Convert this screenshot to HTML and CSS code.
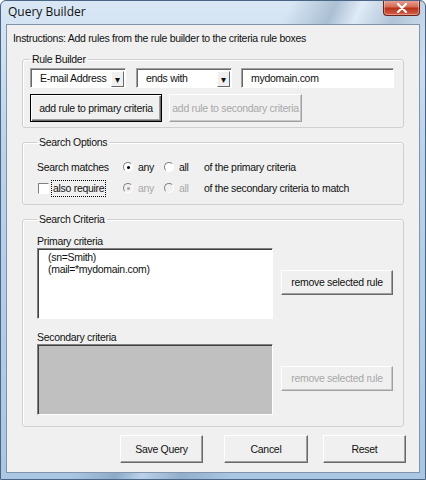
FILE: index.html
```html
<!DOCTYPE html>
<html lang="en">
<head>
    <meta charset="UTF-8">
    <title>Query Builder</title>
    <link rel="stylesheet" href="styles.css">
</head>
<body>
    <div class="window">
        <div class="titlebar">
            <span class="title">Query Builder</span>
            <span class="close-btn">
                <svg width="14" height="10" viewBox="0 0 14 10">
                    <path d="M3 1 L11 9 M11 1 L3 9" stroke="#fff" stroke-width="2.2" stroke-linecap="round"/>
                </svg>
            </span>
        </div>

        <div class="client">
            <div class="instructions">Instructions: Add rules from the rule builder to the criteria rule boxes</div>

            <fieldset class="group">
                <legend>Rule Builder</legend>
                <div class="rule-row">
                    <div class="combo combo-attr">
                        <span class="combo-text">E-mail Address</span>
                        <span class="combo-arrow">&#9662;</span>
                    </div>
                    <div class="combo combo-op">
                        <span class="combo-text">ends with</span>
                        <span class="combo-arrow">&#9662;</span>
                    </div>
                    <div class="textbox">mydomain.com</div>
                </div>
                <div class="rule-row buttons-row">
                    <button class="btn btn-default btn-add">add rule to primary criteria</button>
                    <button class="btn btn-add2" disabled>add rule to secondary criteria</button>
                </div>
            </fieldset>

            <fieldset class="group options">
                <legend>Search Options</legend>
                <div class="opt-row">
                    <span class="opt-label">Search matches</span>
                    <span class="radio-item"><span class="radio checked"></span>any</span>
                    <span class="radio-item"><span class="radio"></span>all</span>
                    <span>of the primary criteria</span>
                </div>
                <div class="opt-row">
                    <span class="opt-label"><span class="checkbox"></span><span class="focus">also require</span></span>
                    <span class="radio-item disabled"><span class="radio checked"></span>any</span>
                    <span class="radio-item disabled"><span class="radio"></span>all</span>
                    <span>of the secondary criteria to match</span>
                </div>
            </fieldset>

            <fieldset class="group criteria">
                <legend>Search Criteria</legend>
                <div class="crit-label">Primary criteria</div>
                <div class="crit-row">
                    <div class="listbox">
                        <div>(sn=Smith)</div>
                        <div>(mail=*mydomain.com)</div>
                    </div>
                    <button class="btn btn-remove">remove selected rule</button>
                </div>
                <div class="crit-label second">Secondary criteria</div>
                <div class="crit-row">
                    <div class="listbox listbox-off"></div>
                    <button class="btn btn-remove" disabled>remove selected rule</button>
                </div>
            </fieldset>

            <div class="footer">
                <button class="btn btn-foot">Save Query</button>
                <button class="btn btn-foot btn-cancel">Cancel</button>
                <button class="btn btn-foot btn-reset">Reset</button>
            </div>
        </div>
    </div>
</body>
</html>
```

FILE: styles.css
```css
body {
    margin: 0;
    font-family: "Liberation Sans", Arial, sans-serif;
    font-size: 10.5px;
    letter-spacing: -0.3px;
    color: #111;
}
.window {
    width: 426px;
    height: 480px;
    box-sizing: border-box;
    background:
        linear-gradient(115deg, rgba(255,255,255,0) 45%, rgba(90,120,150,0.35) 52%, rgba(255,255,255,0.2) 56%, rgba(90,120,150,0.3) 62%, rgba(255,255,255,0) 70%),
        linear-gradient(to bottom, #d9e7f5 0%, #bcd3ea 30%, #a9c6e3 100%);
    border: 1px solid #4a6585;
    border-radius: 6px 6px 0 0;
    overflow: hidden;
}
.titlebar {
    height: 23px;
    display: flex;
    justify-content: space-between;
    align-items: flex-start;
}
.title {
    font-family: "Open Sans", "Liberation Sans", sans-serif;
    font-size: 12px;
    letter-spacing: 0;
    line-height: 22px;
    padding-left: 7px;
}
.close-btn {
    width: 35px;
    height: 15px;
    margin-right: 5px;
    margin-top: -1px;
    display: flex;
    align-items: center;
    justify-content: center;
    background: linear-gradient(to bottom, #e9a99b 0%, #d66c56 45%, #b8321b 55%, #d5604a 100%);
    border: 1px solid #6d2418;
    border-top: none;
    border-radius: 0 0 4px 4px;
    box-shadow: inset 0 0 0 1px rgba(255,255,255,0.35);
}
.client {
    margin: 0 5px;
    height: 449px;
    box-sizing: border-box;
    background-color: #f0f0f0;
    border: 1px solid #8095ad;
    padding-top: 7px;
}
.instructions {
    line-height: 13px;
    padding-left: 6px;
}
.group {
    margin: 8px 15px 0 15px;
    padding: 2px 7px 5px 7px;
    border: 1px solid #d0d0d0;
    border-radius: 3px;
    box-shadow: inset 1px 1px 0 #fff;
}
.group legend {
    padding: 0 2px;
    line-height: 13px;
}
.rule-row {
    display: flex;
    height: 20px;
}
.buttons-row {
    margin-top: 6px;
    height: 28px;
    gap: 7px;
}
.combo {
    display: flex;
    justify-content: space-between;
    align-items: center;
    box-sizing: border-box;
    height: 20px;
    background-color: #fff;
    border: 1px solid;
    border-color: #a0a0a0 #fff #fff #a0a0a0;
    box-shadow: inset 1px 1px 0 #696969;
}
.combo-attr {
    width: 96px;
    margin-right: 10px;
}
.combo-op {
    width: 96px;
    margin-right: 9px;
}
.combo-text {
    padding-left: 9px;
    white-space: nowrap;
}
.combo-arrow {
    width: 13px;
    height: 16px;
    margin: 1px 1px 0 0;
    box-sizing: border-box;
    text-align: center;
    font-size: 10px;
    line-height: 16px;
    letter-spacing: 0;
    background-color: #f0f0f0;
    border: 1px solid;
    border-color: #fff #696969 #696969 #fff;
}
.textbox {
    width: 153px;
    height: 20px;
    box-sizing: border-box;
    padding-left: 9px;
    line-height: 18px;
    background-color: #fff;
    border: 1px solid;
    border-color: #a0a0a0 #fff #fff #a0a0a0;
    box-shadow: inset 1px 1px 0 #696969;
}
.btn {
    font-family: "Liberation Sans", Arial, sans-serif;
    font-size: 10.5px;
    letter-spacing: -0.3px;
    white-space: nowrap;
    color: #111;
    background-color: #f0f0f0;
    border: 1px solid;
    border-color: #fff #696969 #696969 #fff;
    box-shadow: inset -1px -1px 0 #a0a0a0;
    padding: 0;
    margin: 0;
}
.btn:disabled {
    color: #a8a8a8;
    border-color: #fff #a0a0a0 #a0a0a0 #fff;
    box-shadow: inset -1px -1px 0 #c8c8c8;
}
.btn-default {
    border: 1px solid #000;
    box-shadow: inset 1px 1px 0 #fff, inset -1px -1px 0 #696969, inset -2px -2px 0 #a0a0a0;
}
.btn-add {
    width: 132px;
}
.btn-add2 {
    width: 133px;
}
.options {
    padding: 9px 7px 7px 14px;
}
.opt-row {
    display: grid;
    grid-template-columns: 86px 41px 40px auto;
    align-items: center;
    height: 18px;
}
.opt-row + .opt-row {
    margin-top: 3px;
}
.opt-label {
    display: flex;
    align-items: center;
}
.radio-item {
    display: flex;
    align-items: center;
}
.radio {
    width: 8px;
    height: 8px;
    margin-right: 5px;
    border-radius: 50%;
    border: 1px solid;
    border-color: #808080 #fff #fff #808080;
    background-color: #fff;
    display: flex;
    align-items: center;
    justify-content: center;
}
.radio.checked::after {
    content: "";
    width: 3px;
    height: 3px;
    border-radius: 50%;
    background-color: #000;
}
.disabled {
    color: #a8a8a8;
}
.disabled .radio {
    background-color: #f0f0f0;
}
.disabled .radio.checked::after {
    background-color: #a8a8a8;
}
.checkbox {
    width: 9px;
    height: 9px;
    margin-left: 1px;
    margin-right: 2px;
    border: 1px solid;
    border-color: #808080 #fff #fff #808080;
    background-color: #fff;
}
.focus {
    border: 1px dotted #000;
    padding: 1px 1px;
    line-height: 13px;
}
.criteria {
    padding: 9px 7px 11px 14px;
}
.crit-label {
    line-height: 13px;
}
.crit-label.second {
    margin-top: 12px;
}
.crit-row {
    display: flex;
    align-items: center;
    gap: 8px;
}
.listbox {
    width: 236px;
    height: 71px;
    box-sizing: border-box;
    padding: 2px 10px;
    line-height: 12px;
    background-color: #fff;
    border: 1px solid;
    border-color: #808080 #fff #fff #808080;
    box-shadow: inset 1px 1px 0 #404040;
}
.listbox-off {
    background-color: #c0c0c0;
}
.btn-remove {
    width: 112px;
    height: 25px;
    margin-top: -3px;
}
.footer {
    display: flex;
    justify-content: flex-end;
    margin: 8px 13px 0 0;
}
.btn-foot {
    width: 83px;
    height: 28px;
}
.btn-cancel {
    width: 84px;
    margin-left: 21px;
}
.btn-reset {
    margin-left: 15px;
}
```
